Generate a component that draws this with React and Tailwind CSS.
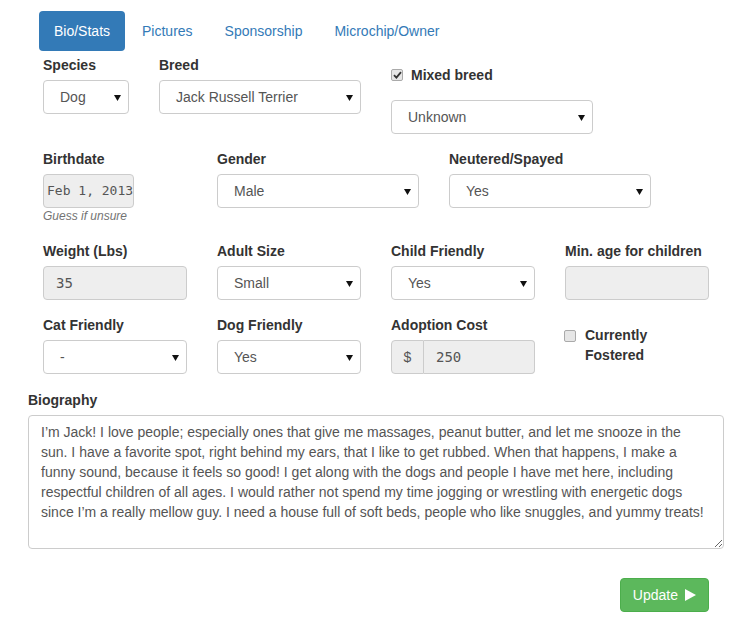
import React from "react";

const bio =
  "I\u2019m Jack! I love people; especially ones that give me massages, peanut butter, and let me snooze in the\nsun. I have a favorite spot, right behind my ears, that I like to get rubbed. When that happens, I make a\nfunny sound, because it feels so good! I get along with the dogs and people I have met here, including\nrespectful children of all ages. I would rather not spend my time jogging or wrestling with energetic dogs\nsince I\u2019m a really mellow guy. I need a house full of soft beds, people who like snuggles, and yummy treats!";

function Label({ children }) {
  return <label className="block mb-[5px] font-bold text-[#333] leading-5">{children}</label>;
}

function Select({ value, width }) {
  return (
    <div
      className={`relative h-[34px] rounded-[4px] border border-[#ccc] bg-white flex items-center pl-[16px] text-[#555] ${width}`}
    >
      <span>{value}</span>
      <svg className="absolute right-[7px] top-[14px]" width="7" height="6" viewBox="0 0 7 6">
        <path d="M0 0 L7 0 L3.5 6 Z" fill="#111" />
      </svg>
    </div>
  );
}

function GrayInput({ value, width, className = "" }) {
  return (
    <div
      className={`h-[34px] rounded-[4px] border border-[#ccc] bg-[#eee] flex items-center px-3 text-[#555] font-['DejaVu_Sans_Mono',monospace] text-[14px] ${width} ${className}`}
    >
      {value}
    </div>
  );
}

function Check({ checked }) {
  return (
    <span className="w-[12px] h-[12px] rounded-[2px] border border-[#aaa] bg-[#e6e6e6] flex items-center justify-center shrink-0">
      {checked && (
        <svg width="9" height="8" viewBox="0 0 9 8">
          <path d="M1 4.2 L3.4 6.6 L8 1.2" stroke="#333" strokeWidth="1.8" fill="none" />
        </svg>
      )}
    </span>
  );
}

export default function App() {
  const tabs = ["Bio/Stats", "Pictures", "Sponsorship", "Microchip/Owner"];
  return (
    <div className="w-[751px] h-[623px] bg-white font-['Liberation_Sans',Arial,sans-serif] text-[14px] leading-5 text-[#333]">
      <nav className="flex pl-[39px] pt-[11px]">
        {tabs.map((t, i) => (
          <a
            key={t}
            className={
              i === 0
                ? "px-[15px] py-[10px] rounded-[4px] bg-[#337ab7] text-white"
                : "ml-[2px] px-[15px] py-[10px] text-[#337ab7]"
            }
          >
            {t}
          </a>
        ))}
      </nav>

      <div className="pl-[43px] mt-[4px]">
        {/* row 1 */}
        <div className="flex items-start mb-[15px]">
          <div className="w-[116px]">
            <Label>Species</Label>
            <Select value="Dog" width="w-[86px]" />
          </div>
          <div className="w-[232px]">
            <Label>Breed</Label>
            <Select value="Jack Russell Terrier" width="w-[202px]" />
          </div>
          <div>
            <div className="mt-[10px] h-5 flex items-center gap-[8px] font-bold">
              <Check checked />
              <span>Mixed breed</span>
            </div>
            <div className="mt-[15px]">
              <Select value="Unknown" width="w-[202px]" />
            </div>
          </div>
        </div>

        {/* row 2 */}
        <div className="flex items-start mb-[17px]">
          <div className="w-[174px]">
            <Label>Birthdate</Label>
            <div className="w-[91px] h-[34px] rounded-[4px] border border-[#ccc] bg-[#eee] flex items-center pl-[3px] text-[#555] font-['DejaVu_Sans_Mono',monospace] text-[13px] whitespace-nowrap">
              Feb 1, 2013
            </div>
            <p className="mt-[1px] text-[12px] leading-[15px] italic text-[#737373]">Guess if unsure</p>
          </div>
          <div className="w-[232px]">
            <Label>Gender</Label>
            <Select value="Male" width="w-[202px]" />
          </div>
          <div>
            <Label>Neutered/Spayed</Label>
            <Select value="Yes" width="w-[202px]" />
          </div>
        </div>

        {/* row 3 */}
        <div className="flex items-start mb-[15px]">
          <div className="w-[174px]">
            <Label>Weight (Lbs)</Label>
            <GrayInput value="35" width="w-[144px]" />
          </div>
          <div className="w-[174px]">
            <Label>Adult Size</Label>
            <Select value="Small" width="w-[144px]" />
          </div>
          <div className="w-[174px]">
            <Label>Child Friendly</Label>
            <Select value="Yes" width="w-[144px]" />
          </div>
          <div>
            <Label>Min. age for children</Label>
            <GrayInput value="" width="w-[144px]" />
          </div>
        </div>

        {/* row 4 */}
        <div className="flex items-start mb-[16px]">
          <div className="w-[174px]">
            <Label>Cat Friendly</Label>
            <Select value="-" width="w-[144px]" />
          </div>
          <div className="w-[174px]">
            <Label>Dog Friendly</Label>
            <Select value="Yes" width="w-[144px]" />
          </div>
          <div className="w-[174px]">
            <Label>Adoption Cost</Label>
            <div className="flex w-[144px] h-[34px]">
              <span className="w-[33px] flex items-center justify-center rounded-l-[4px] border border-[#ccc] bg-[#eee] text-[#555]">
                $
              </span>
              <span className="flex-1 flex items-center pl-[12px] rounded-r-[4px] border border-l-0 border-[#ccc] bg-[#eee] text-[#555] font-['DejaVu_Sans_Mono',monospace]">
                250
              </span>
            </div>
          </div>
          <div className="mt-[10px] flex items-start gap-[9px] font-bold">
            <span className="mt-[5px] -ml-[1px]">
              <Check />
            </span>
            <span>
              Currently
              <br />
              Fostered
            </span>
          </div>
        </div>
      </div>

      <div className="px-[28px]">
        <label className="block mb-[5px] font-bold leading-5">Biography</label>
        <textarea
          readOnly
          value={bio}
          className="block w-[696px] h-[134px] rounded-[4px] border border-[#ccc] bg-white px-3 py-[6px] text-[#555] leading-5 text-[14px] font-['Liberation_Sans',Arial,sans-serif] resize-y outline-none"
        />
        <div className="flex justify-end pr-[14px] mt-[29px]">
          <button className="h-[34px] flex items-center gap-[7px] px-[12px] rounded-[4px] border border-[#4cae4c] bg-[#5cb85c] text-white">
            Update
            <svg width="11" height="12" viewBox="0 0 11 12">
              <path d="M0 0 L11 6 L0 12 Z" fill="#fff" />
            </svg>
          </button>
        </div>
      </div>
    </div>
  );
}
